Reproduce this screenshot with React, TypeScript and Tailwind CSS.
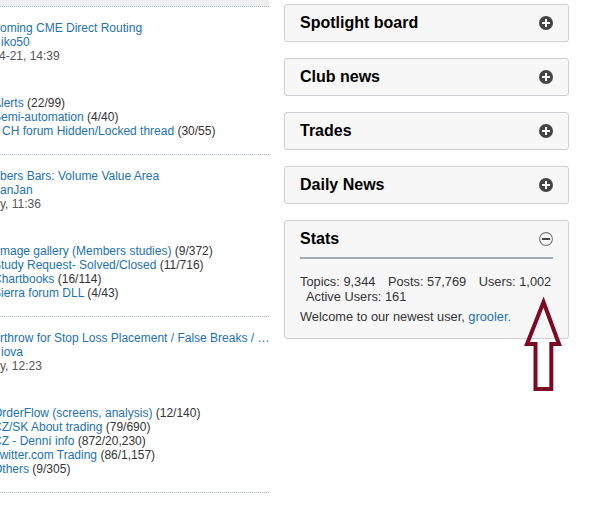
import React from "react";

const font = { fontFamily: '"Liberation Sans", Arial, sans-serif' };

type Line = { text: string; count?: string; shift?: number; kind?: "link" | "meta" };

function TextLine({ line }: { line: Line }) {
  const color = line.kind === "meta" ? "text-[#555]" : "text-[#2371b4]";
  return (
    <div
      className="whitespace-nowrap h-[14px] leading-[14px]"
      style={line.shift ? { marginLeft: line.shift } : undefined}
    >
      <span className={color}>{line.text}</span>
      {line.count && <span className="text-[#333]"> {line.count}</span>}
    </div>
  );
}

function ForumRow({ topic, forums }: { topic: Line[]; forums: Line[] }) {
  return (
    <div className="pt-[14px] pb-[16px] border-b border-dotted border-[#a9b3cf]">
      <div>
        {topic.map((l, i) => (
          <TextLine key={i} line={l} />
        ))}
      </div>
      <div className="mt-[33px]">
        {forums.map((l, i) => (
          <TextLine key={i} line={l} />
        ))}
      </div>
    </div>
  );
}

function PlusIcon() {
  return (
    <svg width="14" height="14" viewBox="0 0 14 14">
      <circle cx="7" cy="7" r="7" fill="#444" />
      <rect x="3" y="6" width="8" height="2" fill="#fff" />
      <rect x="6" y="3" width="2" height="8" fill="#fff" />
    </svg>
  );
}

function MinusIcon() {
  return (
    <svg width="14" height="14" viewBox="0 0 14 14">
      <circle cx="7" cy="7" r="6.4" fill="#fafafa" stroke="#777" strokeWidth="1.1" />
      <rect x="3" y="6" width="8" height="2" fill="#444" />
    </svg>
  );
}

function Panel({ title }: { title: string }) {
  return (
    <div className="h-[38px] rounded-[3px] border border-[#ccd0d4] bg-[#f7f7f7] flex items-center justify-between pl-[15px] pr-[15px]">
      <span className="text-[16px] font-bold text-[#000]">{title}</span>
      <PlusIcon />
    </div>
  );
}

export default function App() {
  return (
    <div className="relative w-[589px] h-[506px] bg-white overflow-hidden text-[12px]" style={font}>
      <div className="flex">
        <div className="w-[269px] overflow-hidden">
          <div className="h-[7px] bg-[#eeeeee] border-b border-dotted border-[#a9b3cf]" />
          <ForumRow
            topic={[
              { text: "oming CME Direct Routing" },
              { text: "iko50", shift: 1 },
              { text: "4-21, 14:39", kind: "meta", shift: -1 },
            ]}
            forums={[
              { text: "Alerts", count: "(22/99)", shift: -7 },
              { text: "Semi-automation", count: "(4/40)", shift: -7 },
              { text: "CH forum Hidden/Locked thread", count: "(30/55)", shift: 2 },
            ]}
          />
          <ForumRow
            topic={[
              { text: "bers Bars: Volume Value Area" },
              { text: "anJan" },
              { text: "y, 11:36", kind: "meta" },
            ]}
            forums={[
              { text: "mage gallery (Members studies)", count: "(9/372)" },
              { text: "Study Request- Solved/Closed", count: "(11/716)", shift: -7 },
              { text: "Chartbooks", count: "(16/114)", shift: -7 },
              { text: "Sierra forum DLL", count: "(4/43)", shift: -7 },
            ]}
          />
          <ForumRow
            topic={[
              { text: "rthrow for Stop Loss Placement / False Breaks / …" },
              { text: "iova", shift: 1 },
              { text: "y, 12:23", kind: "meta" },
            ]}
            forums={[
              { text: "OrderFlow (screens, analysis)", count: "(12/140)", shift: -7 },
              { text: "CZ/SK About trading", count: "(79/690)", shift: -7 },
              { text: "CZ - Denní info", count: "(872/20,230)", shift: -7 },
              { text: "Twitter.com Trading", count: "(86/1,157)", shift: -7 },
              { text: "Others", count: "(9/305)", shift: -7 },
            ]}
          />
        </div>

        <div className="ml-[15px] w-[285px] pt-[4px] flex flex-col gap-[16px]">
          <Panel title="Spotlight board" />
          <Panel title="Club news" />
          <Panel title="Trades" />
          <Panel title="Daily News" />
          <div className="rounded-[3px] border border-[#ccd0d4] bg-[#f7f7f7]">
            <div className="mx-[15px] h-[38px] flex items-center justify-between border-b-2 border-[#a4abb2]">
              <span className="text-[16px] font-bold text-[#000]">Stats</span>
              <MinusIcon />
            </div>
            <div className="px-[15px] pt-[15px] pb-[14px] text-[12.8px] text-[#333]">
              <div className="leading-[15px] whitespace-nowrap">
                <span>Topics: 9,344</span>
                <span className="ml-[12.5px]">Posts: 57,769</span>
                <span className="ml-[12.5px]">Users: 1,002</span>
              </div>
              <div className="leading-[15px] pl-[6px]">Active Users: 161</div>
              <div className="leading-[15px] mt-[5px]">
                Welcome to our newest user, <span className="text-[#2371b4]">grooler.</span>
              </div>
            </div>
          </div>
        </div>
      </div>

      <svg className="absolute left-0 top-0 pointer-events-none" width="589" height="506">
        <polygon
          points="543.5,302 559,344 551.3,344 551.3,389 535.5,389 535.5,344 527,344"
          fill="none"
          stroke="#7d0a22"
          strokeWidth="4"
          strokeLinejoin="miter"
        />
      </svg>
    </div>
  );
}
